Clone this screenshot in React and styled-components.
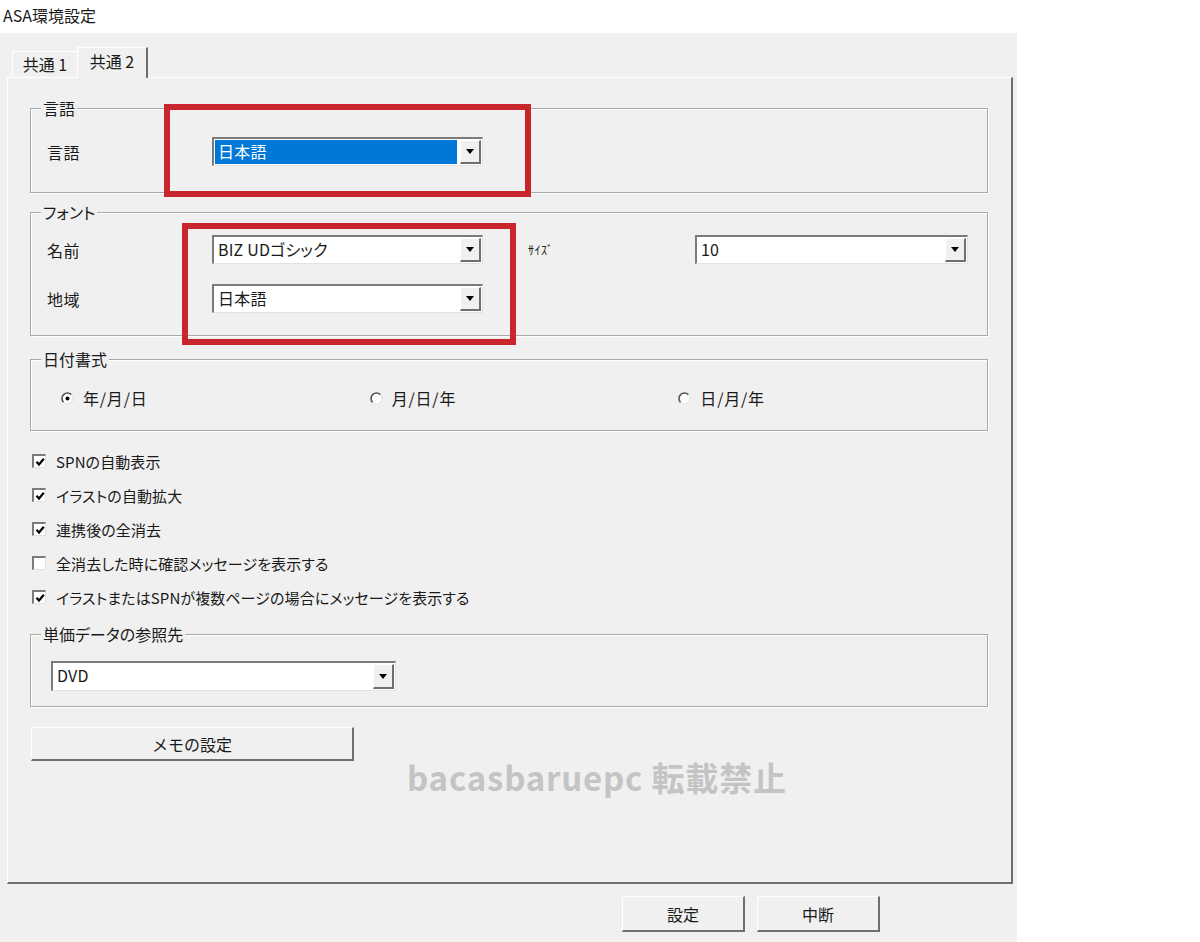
import React from "react";
import styled, { createGlobalStyle } from "styled-components";

const GlobalStyle = createGlobalStyle`
  html, body {
    margin: 0;
    padding: 0;
    background: #ffffff;
  }
  body {
    font-family: "Noto Sans CJK JP", "Noto Sans", sans-serif;
    font-feature-settings: "palt" 1;
    color: #1a1a1a;
  }
`;

const Page = styled.div`
  width: 1200px;
  height: 942px;
  overflow: hidden;
`;

const Title = styled.div`
  height: 33px;
  padding-left: 3px;
  font-size: 16px;
  line-height: 30px;
`;

const Dialog = styled.div`
  width: 1017px;
  height: 909px;
  box-sizing: border-box;
  background: #f0f0f0;
  padding: 14px 0 0 7px;
  display: flex;
  flex-direction: column;
`;

const TabStrip = styled.div`
  height: 30px;
  padding-left: 5px;
  display: flex;
  align-items: flex-end;
`;

const Tab = styled.div`
  box-sizing: border-box;
  width: ${(p) => p.$w}px;
  height: ${(p) => (p.$active ? 31 : 26)}px;
  margin-bottom: ${(p) => (p.$active ? -1 : 0)}px;
  background: #f0f0f0;
  border-top: 1px solid #ffffff;
  border-left: 1px solid #ffffff;
  border-right: ${(p) => (p.$active ? "2px solid #6e6e6e" : "none")};
  font-size: 16px;
  line-height: ${(p) => (p.$active ? 26 : 24)}px;
  text-align: center;
  position: relative;
  z-index: ${(p) => (p.$active ? 2 : 1)};
`;

const Panel = styled.div`
  position: relative;
  width: 1006px;
  height: 807px;
  box-sizing: border-box;
  border-top: 1px solid #ffffff;
  border-left: 1px solid #ffffff;
  border-right: 2px solid #6e6e6e;
  border-bottom: 2px solid #6e6e6e;
  padding-left: 22px;
  display: flex;
  flex-direction: column;
  align-items: flex-start;
`;

const Group = styled.div`
  position: relative;
  box-sizing: border-box;
  width: 958px;
  height: ${(p) => p.$h}px;
  margin-top: ${(p) => p.$mt}px;
  border: 1px solid #a8a8a8;
  box-shadow: inset 1px 1px 0 #ffffff, 1px 1px 0 #ffffff;
  padding: ${(p) => p.$pad};
  display: flex;
  flex-direction: column;
  gap: ${(p) => p.$gap || 0}px;
`;

const Legend = styled.span`
  position: absolute;
  top: -11px;
  left: 10px;
  padding: 0 2px;
  background: #f0f0f0;
  font-size: 16px;
  line-height: 20px;
`;

const Row = styled.div`
  display: flex;
  align-items: center;
`;

const Label = styled.span`
  width: ${(p) => p.$w}px;
  margin-left: ${(p) => p.$ml || 0}px;
  font-size: ${(p) => p.$fs || 16}px;
  letter-spacing: 0.5px;
  flex-shrink: 0;
`;

const ComboBox = styled.div`
  box-sizing: border-box;
  width: ${(p) => p.$w}px;
  height: ${(p) => p.$h || 29}px;
  flex-shrink: 0;
  background: #ffffff;
  border-style: solid;
  border-width: 2px 1px 1px 2px;
  border-color: #7b7b7b #e2e2e2 #e2e2e2 #7b7b7b;
  display: flex;
  padding: 1px;
`;

const ComboText = styled.div`
  flex: 1;
  padding-left: 3px;
  margin-right: 3px;
  font-size: 16px;
  line-height: 23px;
  letter-spacing: 0.2px;
  background: ${(p) => (p.$selected ? "#0078d7" : "transparent")};
  color: ${(p) => (p.$selected ? "#ffffff" : "#1a1a1a")};
  white-space: nowrap;
`;

const DropButton = styled.div`
  box-sizing: border-box;
  width: 21px;
  background: #f0f0f0;
  border-top: 1px solid #ffffff;
  border-left: 1px solid #ffffff;
  border-right: 2px solid #6e6e6e;
  border-bottom: 2px solid #6e6e6e;
  display: flex;
  align-items: center;
  justify-content: center;
`;

const RadioRow = styled.div`
  display: flex;
  align-items: center;
  height: 20px;
`;

const RadioItem = styled.label`
  width: 311px;
  display: flex;
  align-items: center;
  gap: 9px;
  font-size: 16px;
  letter-spacing: 0.8px;
`;

const CheckList = styled.div`
  margin-top: 13px;
  padding-left: 2px;
  display: flex;
  flex-direction: column;
`;

const CheckRow = styled.label`
  height: 34px;
  display: flex;
  align-items: center;
  gap: 10px;
  font-size: 15px;
  letter-spacing: 0.1px;
`;

const CheckBox = styled.span`
  box-sizing: border-box;
  width: 14px;
  height: 14px;
  background: #ffffff;
  border-style: solid;
  border-width: 2px 1px 1px 2px;
  border-color: #7b7b7b #e2e2e2 #e2e2e2 #7b7b7b;
  display: flex;
  align-items: center;
  justify-content: center;
`;

const PushButton = styled.button`
  box-sizing: border-box;
  width: ${(p) => p.$w}px;
  height: ${(p) => p.$h}px;
  margin-top: ${(p) => p.$mt || 0}px;
  margin-left: ${(p) => p.$ml || 0}px;
  background: #f0f0f0;
  border-style: solid;
  border-width: 1px 2px 2px 1px;
  border-color: #ffffff #6e6e6e #6e6e6e #ffffff;
  font-family: "Noto Sans CJK JP", sans-serif;
  font-size: 16px;
  color: #1a1a1a;
  padding: 0;
`;

const Footer = styled.div`
  margin-top: 12px;
  padding-right: 137px;
  display: flex;
  justify-content: flex-end;
  gap: 12px;
`;

const Highlight = styled.div`
  position: absolute;
  left: ${(p) => p.$x}px;
  top: ${(p) => p.$y}px;
  width: ${(p) => p.$w}px;
  height: ${(p) => p.$h}px;
  box-sizing: border-box;
  border: 6px solid #c9252c;
  pointer-events: none;
`;

const Watermark = styled.div`
  position: absolute;
  left: 399px;
  top: 683px;
  font-size: 33px;
  font-weight: 700;
  line-height: 32px;
  letter-spacing: 0.8px;
  color: #c4c4c4;
  white-space: nowrap;
`;

function Arrow() {
  return (
    <svg width="8" height="5" viewBox="0 0 8 5">
      <path d="M0 0 H8 L4 5 Z" fill="#000" />
    </svg>
  );
}

function Combo({ w, h, text, selected }) {
  return (
    <ComboBox $w={w} $h={h}>
      <ComboText $selected={selected}>{text}</ComboText>
      <DropButton>
        <Arrow />
      </DropButton>
    </ComboBox>
  );
}

function Radio({ checked }) {
  return (
    <svg width="13" height="13" viewBox="0 0 13 13">
      <circle cx="6.5" cy="6.5" r="5.5" fill="#ffffff" />
      <path d="M10.4 2.6 A5.5 5.5 0 0 0 2.6 10.4" stroke="#555555" strokeWidth="1.6" fill="none" />
      <path d="M2.6 10.4 A5.5 5.5 0 0 0 10.4 2.6" stroke="#e2e2e2" strokeWidth="1.2" fill="none" />
      {checked && <circle cx="6.5" cy="6.5" r="2" fill="#000" />}
    </svg>
  );
}

function Check({ checked, children }) {
  return (
    <CheckRow>
      <CheckBox>
        {checked && (
          <svg width="10" height="10" viewBox="0 0 10 10">
            <path d="M1.5 4.8 L4 7.5 L8.8 1.8" stroke="#000" strokeWidth="2.2" fill="none" />
          </svg>
        )}
      </CheckBox>
      {children}
    </CheckRow>
  );
}

const checks = [
  { text: "SPNの自動表示", on: true },
  { text: "イラストの自動拡大", on: true },
  { text: "連携後の全消去", on: true },
  { text: "全消去した時に確認メッセージを表示する", on: false },
  { text: "イラストまたはSPNが複数ページの場合にメッセージを表示する", on: true },
];

export default function App() {
  return (
    <Page>
      <GlobalStyle />
      <Title>ASA環境設定</Title>
      <Dialog>
        <TabStrip>
          <Tab $w={65}>共通 1</Tab>
          <Tab $w={71} $active>共通 2</Tab>
        </TabStrip>
        <Panel>
          <Group $mt={30} $h={85} $pad="28px 0 0 16px">
            <Legend>言語</Legend>
            <Row>
              <Label $w={165}>言語</Label>
              <Combo w={271} text="日本語" selected />
            </Row>
          </Group>

          <Group $mt={19} $h={124} $pad="22px 0 0 16px" $gap={20}>
            <Legend>フォント</Legend>
            <Row>
              <Label $w={165}>名前</Label>
              <Combo w={271} text="BIZ UDゴシック" />
              <Label $w={167} $ml={45} $fs={12}>ｻｲｽﾞ</Label>
              <Combo w={273} text="10" />
            </Row>
            <Row>
              <Label $w={165}>地域</Label>
              <Combo w={271} text="日本語" />
            </Row>
          </Group>

          <Group $mt={23} $h={72} $pad="28px 0 0 30px">
            <Legend>日付書式</Legend>
            <RadioRow>
              <RadioItem>
                <Radio checked />
                年/月/日
              </RadioItem>
              <RadioItem>
                <Radio />
                月/日/年
              </RadioItem>
              <RadioItem>
                <Radio />
                日/月/年
              </RadioItem>
            </RadioRow>
          </Group>

          <CheckList>
            {checks.map((c) => (
              <Check key={c.text} checked={c.on}>
                {c.text}
              </Check>
            ))}
          </CheckList>

          <Group $mt={20} $h={73} $pad="26px 0 0 20px">
            <Legend>単価データの参照先</Legend>
            <Combo w={345} h={30} text="DVD" />
          </Group>

          <PushButton $w={323} $h={34} $mt={20} $ml={1}>
            メモの設定
          </PushButton>

          <Highlight $x={156} $y={26} $w={367} $h={93} />
          <Highlight $x={174} $y={145} $w={334} $h={122} />
          <Watermark>bacasbaruepc 転載禁止</Watermark>
        </Panel>
        <Footer>
          <PushButton $w={123} $h={36}>設定</PushButton>
          <PushButton $w={123} $h={36}>中断</PushButton>
        </Footer>
      </Dialog>
    </Page>
  );
}
